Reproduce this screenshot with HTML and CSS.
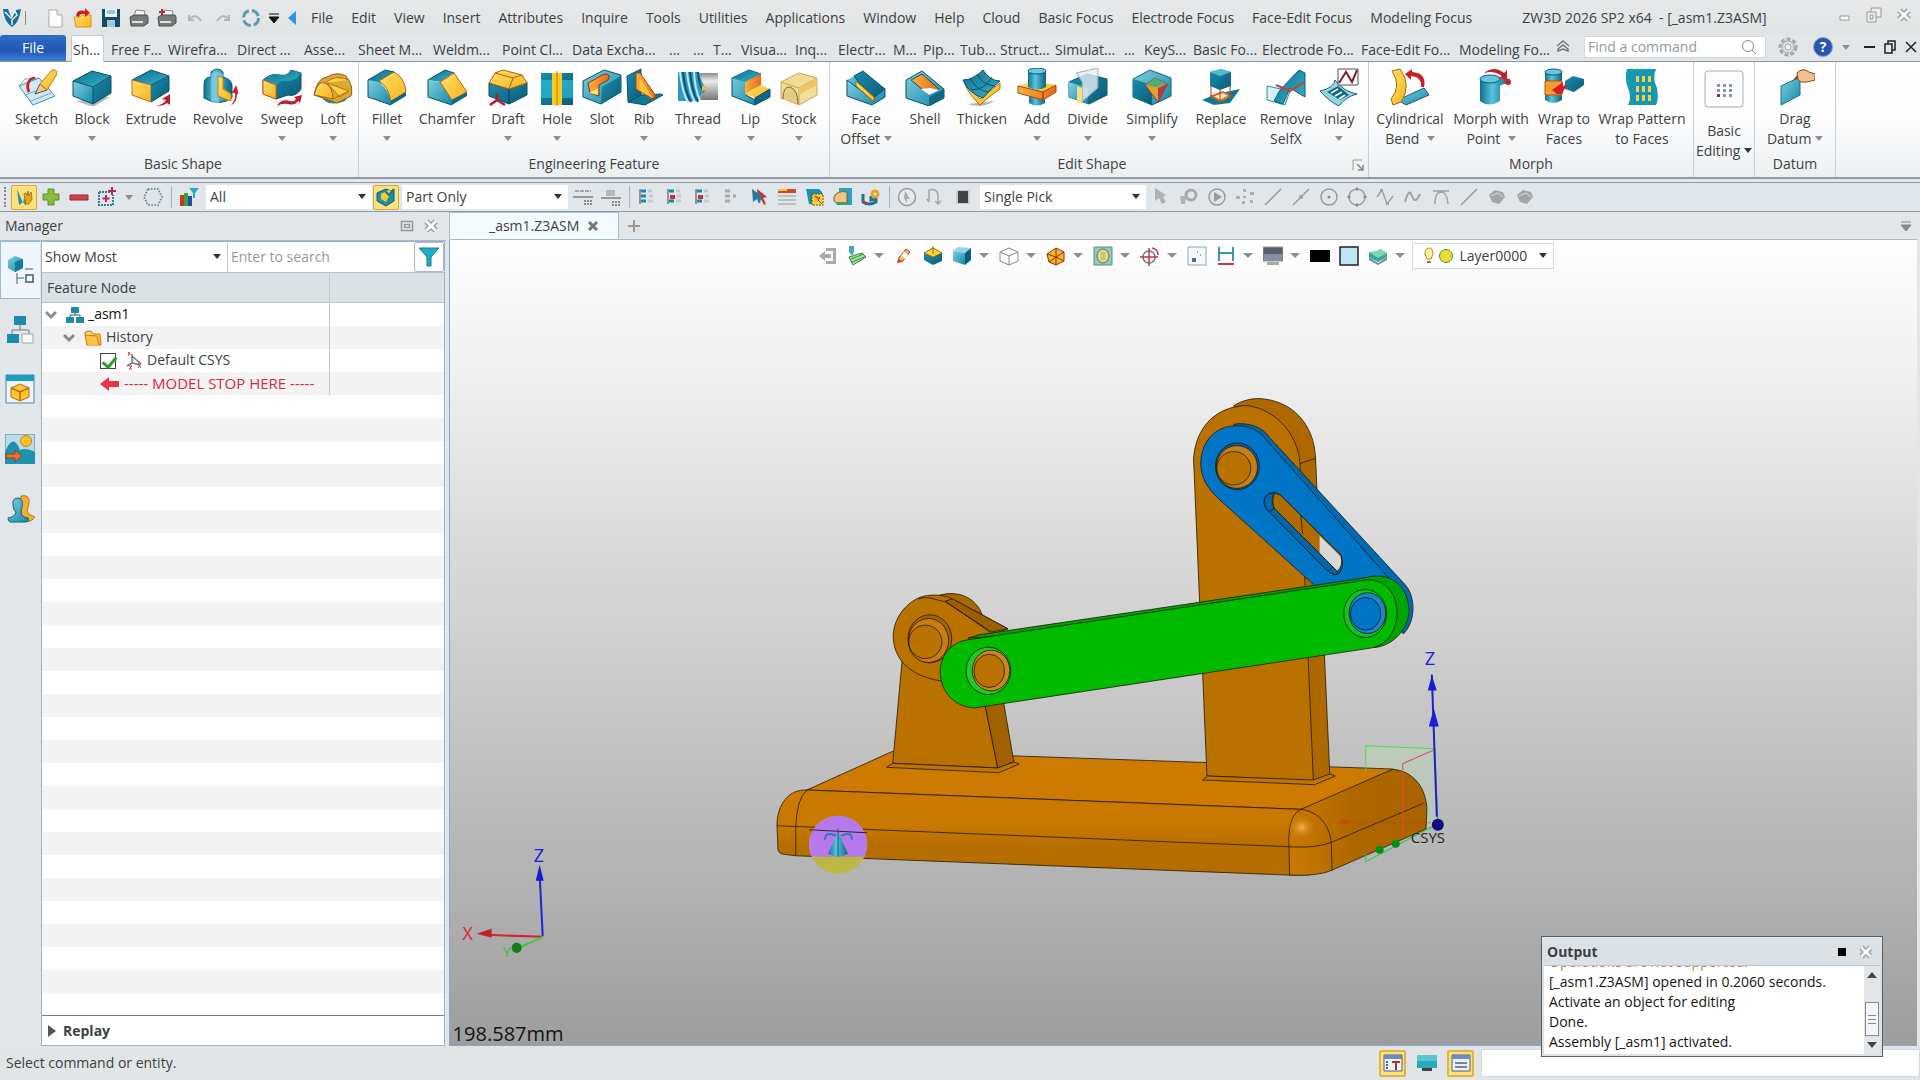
FILE: index.html
```html
<!DOCTYPE html>
<html lang="en">
<head>
<meta charset="utf-8">
<title>ZW3D 2026 SP2 x64 - [_asm1.Z3ASM]</title>
<link rel="stylesheet" href="styles.css">
</head>
<body>
<svg class="defs" aria-hidden="true">
<defs>
<linearGradient id="tl" x1="0" y1="0" x2="1" y2="1"><stop offset="0" stop-color="#7fd0e2"/><stop offset="1" stop-color="#1587a6"/></linearGradient>
<linearGradient id="td" x1="0" y1="0" x2="1" y2="1"><stop offset="0" stop-color="#1b8dac"/><stop offset="1" stop-color="#0b5b78"/></linearGradient>
<linearGradient id="tt" x1="0" y1="0" x2="1" y2="1"><stop offset="0" stop-color="#0f6f8d"/><stop offset="1" stop-color="#35b2cc"/></linearGradient>
<linearGradient id="tc" x1="0" y1="0" x2="1" y2="0"><stop offset="0" stop-color="#126f8f"/><stop offset=".4" stop-color="#58c4dd"/><stop offset="1" stop-color="#0d6380"/></linearGradient>
<linearGradient id="ye" x1="0" y1="0" x2="1" y2="1"><stop offset="0" stop-color="#ffe36a"/><stop offset="1" stop-color="#f9b21c"/></linearGradient>
<linearGradient id="or" x1="0" y1="0" x2="1" y2="0"><stop offset="0" stop-color="#fbb03a"/><stop offset="1" stop-color="#e56a1e"/></linearGradient>
<linearGradient id="gy" x1="0" y1="0" x2="0" y2="1"><stop offset="0" stop-color="#8b8b8b"/><stop offset=".3" stop-color="#ececec"/><stop offset="1" stop-color="#777"/></linearGradient>
</defs>

<symbol id="i-sketch" viewBox="0 0 40 38"><path d="M2 18l20-8 16 18-22 9z" fill="#cfeaf3" stroke="#4a8ba5"/><path d="M2 18l6-7 13-1M8 27l21-8M14 33l20-8" fill="none" stroke="#6cacc2"/><path d="M18 10c-7 0-9 8-6 14" fill="none" stroke="#c01f2b" stroke-width="2.6"/><path d="M18 26l5-10 7 6z" fill="#f3c79a" stroke="#6b4a28"/><path d="M23 16L35 2q5-1 5 4l-10 16z" fill="url(#ye)" stroke="#b87a10"/></symbol>
<symbol id="i-block" viewBox="0 0 40 38"><path d="M4 33l17 6 17-10-4 0z" fill="#bbb"/><path d="M1 13l19-10 19 5-18 11z" fill="url(#tt)"/><path d="M1 13l20 6v17L1 28z" fill="url(#tl)"/><path d="M21 19L39 8v17L21 36z" fill="url(#td)"/><path d="M1 13L20 3l19 5v17L21 36 1 28zM1 13l20 6v17M21 19L39 8" fill="none" stroke="#0c4f66"/></symbol>
<symbol id="i-extrude" viewBox="0 0 40 38"><path d="M1 12l19-10 18 6-18 9z" fill="url(#tt)"/><path d="M1 12l19 5v17L1 27z" fill="url(#ye)" stroke="#c2602a"/><path d="M20 17l18-9v15L20 34z" fill="url(#td)"/><path d="M1 12L20 2l18 6v15L20 34M20 17l18-9" fill="none" stroke="#0c4f66"/><path d="M25 38q8-2 10-6l-4-1 8-5v11l-3-2q-3 3-11 3z" fill="#b9202c"/></symbol>
<symbol id="i-revolve" viewBox="0 0 40 38"><path d="M6 16q0-7 7-7V4q7-6 12 0v5q8 2 9 8v13q-13 9-28 0z" fill="url(#tc)" stroke="#0c5a74"/><path d="M13 6q6-5 12 0v6h-4v23h-8z" fill="#8fd2e4" opacity=".6"/><path d="M20 8l5 2v11l8 5v7l-13-5z" fill="url(#ye)" stroke="#d28015"/><path d="M33 37q5-5 4-12h-3l4-8 3 9h-2q0 9-6 11z" fill="#c9202c"/></symbol>
<symbol id="i-sweep" viewBox="0 0 40 38"><path d="M1 12q8-7 16-5 9 2 12-5l10 3v16q-5 8-13 6l-12 4-13-5z" fill="url(#td)" stroke="#0c4f66"/><path d="M1 12q8-7 16-5 9 2 12-5l10 3q-4 8-14 8-6-1-11 4z" fill="url(#tt)"/><path d="M1 12l13 5v14L1 26z" fill="url(#ye)" stroke="#d35b25"/><path d="M15 38q4-8 13-5 5 1 6-2l-2-2 8-2-2 8-2-2q-3 5-10 3-6-1-11 2z" fill="#b9202c"/></symbol>
<symbol id="i-loft" viewBox="0 0 40 38"><path d="M8 28q6 12 24 5l6-8z" fill="#1a87a6"/><path d="M1 27Q4 10 14 9q10-6 19-1 8 10 5 20l-14 7z" fill="#dca83a" stroke="#8a6012"/><path d="M1 27Q5 12 12 15q8 4 8 16z" fill="url(#ye)" stroke="#b3531c"/><path d="M14 15l22 8-9 6zM12 15q10-9 24-3M20 31l16-8" fill="#ffd23f" stroke="#b3701c"/></symbol>
<symbol id="i-fillet" viewBox="0 0 40 38"><path d="M1 12L18 2l10 2-14 9v19L1 28z" fill="url(#tt)"/><path d="M1 12l11 2q9 7 12 19v4L1 29z" fill="url(#tl)"/><path d="M12 13L27 4q11 6 12 20L24 33Q21 18 12 13z" fill="url(#ye)" stroke="#a86912"/><path d="M24 33l15-9v4l-15 9z" fill="#0f6986"/><path d="M1 12L18 2l9 2M1 12v17l23 8" fill="none" stroke="#0c4f66"/></symbol>
<symbol id="i-chamfer" viewBox="0 0 40 38"><path d="M1 12L18 2l8 3-13 9z" fill="url(#tt)"/><path d="M1 12l12 2 12 18v5L1 29z" fill="url(#tl)"/><path d="M13 14l14-9 13 19-15 8z" fill="url(#ye)" stroke="#b3531c"/><path d="M25 32l15-8v4l-15 9z" fill="#0f6986"/><path d="M1 12L18 2l9 3M1 12v17l24 8" fill="none" stroke="#0c4f66"/></symbol>
<symbol id="i-draft" viewBox="0 0 40 38"><path d="M1 15l20 6v15L1 28zM21 21l18-7v13L21 36z" fill="url(#td)" stroke="#0c4f66"/><path d="M1 15l6-10 8-3 19 5 5 8-18 6z" fill="url(#ye)" stroke="#b35a16"/><path d="M7 5l18 5 9-3M25 10l-4 11" fill="none" stroke="#b35a16"/><path d="M9 25v7l-7 5m7-5l8 5" fill="none" stroke="#b3202b" stroke-width="2.5"/></symbol>
<symbol id="i-hole" viewBox="0 0 40 38"><path d="M4 5h32v32H4z" fill="url(#td)"/><path d="M4 12h32v18H4z" fill="#27bdd8" opacity=".7"/><path d="M15 5h10v32H15z" fill="#fbc91f"/><path d="M20 3v35" stroke="#a87a12"/></symbol>
<symbol id="i-slot" viewBox="0 0 40 38"><path d="M1 13L22 2l17 5v17L19 36 1 29z" fill="url(#tl)" stroke="#0c4f66"/><path d="M20 19L39 8v16L19 36z" fill="url(#td)"/><path d="M6 15L22 6q8 0 4 6l-9 5v11l-9-3z" fill="url(#or)" stroke="#7c3c10"/><path d="M7 25l9-5v7z" fill="#fde36a"/></symbol>
<symbol id="i-rib" viewBox="0 0 40 38"><path d="M3 8L17 1v27l-13 6z" fill="url(#td)" stroke="#0c4f66"/><path d="M4 34l13-7 20-1 2 1-18 10z" fill="#0f7793" stroke="#0c4f66"/><path d="M12 5h4l16 23-4 3-16-10z" fill="url(#or)" stroke="#a34a12"/><path d="M16 10l13 20-14-8z" fill="#fbc737"/></symbol>
<symbol id="i-thread" viewBox="0 0 40 38"><path d="M18 5h22v27H18z" fill="url(#gy)"/><path d="M0 4h20l7 16-7 13H0z" fill="#2f9ac0"/><path d="M2 4q2 20 8 30M9 4q2 20 8 30M16 4q1 18 6 28" fill="none" stroke="#bfe9f5" stroke-width="2"/><path d="M5 4q2 20 8 30M12 4q2 20 8 30M20 4q1 14 6 20" fill="none" stroke="#0f5373" stroke-width="2"/><path d="M24 17l5 3-5 4z" fill="#f5b82b"/></symbol>
<symbol id="i-lip" viewBox="0 0 40 38"><path d="M1 10L18 2l12 4-15 9v12l9 5v5L1 28z" fill="url(#tl)" stroke="#0c4f66"/><path d="M1 10L18 2l12 4-16 8z" fill="url(#tt)"/><path d="M14 14l16-8v11l-16 9z" fill="url(#or)"/><path d="M14 26l16-9 9 4-15 9z" fill="url(#ye)"/><path d="M24 30l15-9v8l-15 8z" fill="#0f6986" stroke="#0c4f66"/></symbol>
<symbol id="i-stock" viewBox="0 0 40 38"><path d="M2 14L20 5l18 5v17L20 37 2 30z" fill="#f1dc9a" stroke="#c9a658"/><path d="M2 14l18 6 18-10M20 20v17" fill="none" stroke="#c9a658"/><path d="M20 20l18-10v7L20 27z" fill="#edc75d"/><path d="M4 31q0-13 7-12 8 3 8 17" fill="#e3cc85" stroke="#7d651e"/></symbol>
<symbol id="i-face" viewBox="0 0 40 38"><path d="M1 12L17 3v20l-16 5z" fill="url(#tl)"/><path d="M17 3l22 18-13 10L8 8z" fill="url(#td)" stroke="#0c4f66"/><path d="M1 12v16l25 9 13-8v-8L26 31z" fill="url(#tl)" stroke="#0c4f66"/><path d="M10 13l18 16v5L10 18z" fill="url(#ye)" stroke="#8c6412"/></symbol>
<symbol id="i-shell" viewBox="0 0 40 38"><path d="M1 12L17 3l22 18v9L24 38 1 30z" fill="url(#tl)" stroke="#0c4f66"/><path d="M6 12l11-6 17 15-10 6z" fill="url(#or)" stroke="#0c4f66"/><path d="M16 21l9-1 9 2-10 5z" fill="#fff"/><path d="M24 29l15-8v9l-15 8z" fill="#0f6986"/></symbol>
<symbol id="i-thicken" viewBox="0 0 40 38"><path d="M6 36q14 5 26-3z" fill="#b9b9a0"/><path d="M2 13q2 10 16 24 12-11 20-16v-6L18 31z" fill="url(#ye)" stroke="#a96b12"/><path d="M1 12q10 0 20-10 7 11 17 11-8 6-17 17Q6 25 1 12z" fill="url(#tt)" stroke="#0c4f66"/><path d="M8 10q6 12 18 14M15 6q5 11 18 12M9 22q14 0 21-13" fill="none" stroke="#0c4f66"/></symbol>
<symbol id="i-add" viewBox="0 0 40 38"><path d="M12 25h16v10q-8 5-16 0z" fill="url(#tc)"/><path d="M1 18l14-5 24 4-13 8z" fill="url(#ye)"/><path d="M1 18l25 6v8L1 25zM26 24l13-7v7l-13 8z" fill="url(#or)" stroke="#a34a12"/><path d="M11 3v16q9 5 18 0V3z" fill="url(#tc)"/><ellipse cx="20" cy="3" rx="9" ry="3" fill="#6acadf" stroke="#0c5a74"/></symbol>
<symbol id="i-divide" viewBox="0 0 40 38"><path d="M1 14l18-8 20 5v16L21 36 1 29z" fill="url(#td)" stroke="#0c4f66"/><path d="M1 14l19 6v16L1 29z" fill="url(#tl)"/><path d="M8 5l22-5v20L14 34V14z" fill="#e5eef2" opacity=".8" stroke="#999"/><path d="M9 18l5 2v16l-5-2z" fill="#f7dc7b"/></symbol>
<symbol id="i-simplify" viewBox="0 0 40 38"><path d="M1 11L18 2l21 8v18L20 37 1 29z" fill="url(#tl)" stroke="#0c6079"/><path d="M1 11l19 6v20L1 29z" fill="url(#td)"/><path d="M13 17l10-7 12 6-9 18z" fill="#e7a02a" stroke="#a33320"/><path d="M13 17l10-7 12 6-11 3z" fill="#4fae74"/><path d="M26 20l11-5-11 20z" fill="#ae3a4a"/></symbol>
<symbol id="i-replace" viewBox="0 0 40 38"><path d="M1 32l14-6 24-5-10 14-16 2z" fill="#137894"/><path d="M11 28l11-4 7 4-10 5z" fill="#fce9b4" stroke="#d16a20" stroke-width="2"/><path d="M10 17v12M29 15v14M19 20v14" stroke="#b6322a"/><path d="M9 4l11-3 10 3v14l-11 4-10-4z" fill="url(#td)"/><path d="M9 4l11-3 10 3-11 4z" fill="#55b9cf"/></symbol>
<symbol id="i-remove" viewBox="0 0 40 38"><path d="M1 18l23 5-5 14-18-5z" fill="#d8eff5" stroke="#2690ad"/><path d="M14 22L33 2l6 3v24L24 20l-7 16-9-3z" fill="url(#tt)" stroke="#0c6079"/><path d="M10 17l14 6 14-9" fill="none" stroke="#c44234" stroke-width="2"/></symbol>
<symbol id="i-inlay" viewBox="0 0 40 38"><path d="M1 23q14-3 15-11 9 12 22 14Q26 29 20 38 11 34 1 23z" fill="#9bd4e3" stroke="#16627b"/><path d="M8 24l11-6 11 9-9 5z" fill="#10657f"/><path d="M12 25l7-4M16 28l7-4M20 31l6-4" stroke="#e7f7fb" stroke-width="2"/><path d="M19 1h20v16H19z" fill="#fff" stroke="#5b4c52"/><path d="M20 15l7-11 6 10 5-12" fill="none" stroke="#7a2230" stroke-width="2"/></symbol>
<symbol id="i-bend" viewBox="0 0 40 38"><path d="M8 32l26-12 5 7-23 10z" fill="url(#tl)" stroke="#0c6079"/><path d="M2 3l8-2q12 16 1 33l-8 3-2-6Q12 18 2 3z" fill="url(#ye)" stroke="#9c6d10"/><path d="M31 19q1-10-10-11v4l-6-6 7-5v3q15 1 12 15z" fill="#c6202c"/></symbol>
<symbol id="i-morph" viewBox="0 0 40 38"><path d="M9 11v22q9 7 20 0V18q4-3 8-2l2-5q-7-1-10 0z" fill="url(#tc)"/><ellipse cx="19" cy="11" rx="10" ry="4" fill="#64c7dd" stroke="#0c5a74"/><path d="M13 5q10-8 20 0l3-3v10l-9-2 4-2Q22 2 14 5z" fill="#c6202c"/><circle cx="37" cy="14" r="3" fill="#c6202c"/></symbol>
<symbol id="i-wrap" viewBox="0 0 40 38"><path d="M1 4v28q8 6 17 0V4z" fill="url(#tc)"/><ellipse cx="9.500" cy="4" rx="8.500" ry="3" fill="#64c7dd" stroke="#0c5a74"/><path d="M1 13h17v14H1z" fill="#f2a02a" stroke="#bf4a18"/><path d="M21 13l8-5 11 3v6l-10 7-9-3z" fill="url(#td)"/><path d="M8 22l11-8v4l4-2-5 10h-5z" fill="#d2202b"/></symbol>
<symbol id="i-pattern" viewBox="0 0 40 38"><path d="M5 1h29q-4 10 1 19 2 11-1 17H6q4-8 0-17-4-10-1-19z" fill="#1697b3"/><path d="M14 8h3v6h-3zM20 8h3v6h-3zM26 8h3v6h-3zM14 18h3v6h-3zM20 18h3v6h-3zM26 18h3v6h-3zM14 27h3v6h-3zM20 27h3v6h-3zM26 27h3v6h-3z" fill="#f4d23b"/></symbol>
<symbol id="i-grid" viewBox="0 0 40 38"><rect x="1" y="1" width="38" height="36" rx="3" fill="#fdfdfd" stroke="#a9acb0"/><path d="M13 14h3v3h-3zM19 14h3v3h-3zM25 14h3v3h-3zM13 19h3v3h-3zM19 19h3v3h-3zM25 19h3v3h-3zM19 24h3v3h-3zM25 24h3v3h-3z" fill="#8799a6"/><path d="M13 24h3v3h-3z" fill="#a12835"/></symbol>
<symbol id="i-drag" viewBox="0 0 40 38"><path d="M6 18L25 9v18L6 37z" fill="url(#tl)" stroke="#107391"/><path d="M18 12l7-8v6z" fill="#a32"/><path d="M22 5q6-6 12-1l6 2v6l-8 2q-8 1-9-3z" fill="#f2c08f" stroke="#7c4a20"/></symbol>

<symbol id="s-logo" viewBox="0 0 20 20"><path d="M1 1h5l3 8 5-7 5-1q-2 14-9 18Q2 14 1 1z" fill="#1c6e94"/><path d="M3 4l6 6 4-7 2 4-5 5v5" fill="none" stroke="#e6eff4" stroke-width="1.500"/></symbol>
<symbol id="s-new" viewBox="0 0 20 20"><path d="M4 2h8l5 5v12H4z" fill="#fff" stroke="#aaa"/><path d="M12 2v5h5" fill="#eee" stroke="#aaa"/></symbol>
<symbol id="s-open" viewBox="0 0 20 20"><path d="M1 9h6l2-2h9v12H3z" fill="url(#ye)" stroke="#d99a18"/><path d="M3 8Q4 1 12 3V0l5 5-5 4V6Q7 5 6 9z" fill="#c6202c"/></symbol>
<symbol id="s-save" viewBox="0 0 20 20"><path d="M1 1h18v18H1z" fill="#164a66"/><path d="M4 1h12v8H4z" fill="#eef5f8"/><path d="M6 3h8M6 5h8" stroke="#3b9fb8"/><path d="M6 12h8v7H6z" fill="#9ccbdc"/></symbol>
<symbol id="s-print" viewBox="0 0 20 20"><path d="M5 8l2-6 9 1-1 6z" fill="#f5f5f5" stroke="#888"/><path d="M1 9l4-2h13l1 2v6l-4 3H2z" fill="#77797a" stroke="#4d4f50"/><path d="M3 14h11" stroke="#ddd" stroke-width="2"/></symbol>
<symbol id="s-undo" viewBox="0 0 20 20"><path d="M4 7v5h5M4 12Q10 4 16 13" fill="none" stroke="#b4b6b7" stroke-width="2"/></symbol>
<symbol id="s-redo" viewBox="0 0 20 20"><path d="M16 7v5h-5M16 12Q10 4 4 13" fill="none" stroke="#b4b6b7" stroke-width="2"/></symbol>
<symbol id="s-sync" viewBox="0 0 20 20"><circle cx="10" cy="10" r="7.500" fill="none" stroke="#5f9ab0" stroke-width="3" stroke-dasharray="9 3"/></symbol>
<symbol id="s-pick" viewBox="0 0 20 20"><path d="M3 2l6 14 1-5 2 4v4l-3-4-4 3z" fill="#2d8fb0"/><path d="M10 7q2-3 3 2l1-5 1 5 2-4 1 7-3 5h-3z" fill="#e8a520" stroke="#a77a18"/></symbol>
<symbol id="s-plus" viewBox="0 0 20 20"><path d="M7 2h6v5h5v6h-5v5H7v-5H2V7h5z" fill="#8bbd3c" stroke="#5f9122"/></symbol>
<symbol id="s-minus" viewBox="0 0 20 20"><path d="M1 8h18v5H1z" fill="#cc4251" stroke="#a32634"/></symbol>
<symbol id="s-marq" viewBox="0 0 20 20"><path d="M2 5h11M2 5v13h14V8" fill="none" stroke="#367a96" stroke-width="2" stroke-dasharray="2 1"/><path d="M15 0v8M11 4h8M9 8v7M5.500 11.500h7" stroke="#b32a4a" stroke-width="2"/></symbol>
<symbol id="s-lasso" viewBox="0 0 20 20"><path d="M5 2h10l4 8-4 8H5l-4-8z" fill="none" stroke="#6a8ea6" stroke-width="2" stroke-dasharray="1.500 1.500"/></symbol>
<symbol id="s-filter" viewBox="0 0 20 20"><path d="M1 8h4v11H1z" fill="#c8342d"/><path d="M5 6h4v13H5z" fill="#3aa239"/><path d="M9 9h4v10H9z" fill="#294d9e"/><path d="M10 1h10l-4 5v5h-2V6z" fill="#2ba8c4"/></symbol>
<symbol id="s-box" viewBox="0 0 20 20"><path d="M1 6l9-4 5 2 3-2v12l-8 5-9-5z" fill="#1991ae" stroke="#0c5a74"/><path d="M5 7l7-4 4 1-6 11-5-3z" fill="#fbc62f"/><path d="M9 4l4 4 4-5" fill="none" stroke="#0c7b98" stroke-width="2"/></symbol>
<symbol id="s-align" viewBox="0 0 20 20"><path d="M2 4h16" stroke="#a5a7a9" stroke-width="2" stroke-dasharray="4 1"/><path d="M0 10h20" stroke="#959799" stroke-width="2"/><path d="M11 14h8M11 17h8" stroke="#888" stroke-width="2" stroke-dasharray="2 1"/></symbol>
<symbol id="s-dist" viewBox="0 0 20 20"><path d="M5 3h9v6H5z" fill="#b5b7b9"/><path d="M0 11h20" stroke="#959799" stroke-width="2"/><path d="M11 15h8M11 18h8" stroke="#888" stroke-width="2" stroke-dasharray="2 1"/></symbol>
<symbol id="s-list" viewBox="0 0 20 20"><path d="M4 4h5M4 9h5M4 14h5" stroke="#1b8aa8" stroke-width="3"/><path d="M3 2v15" stroke="#444"/><path d="M11 4h4M12 9h4M11 14h5" stroke="#c5c9cc" stroke-width="3"/></symbol>
<symbol id="s-listr" viewBox="0 0 20 20"><path d="M4 4h5M4 14h5" stroke="#1b8aa8" stroke-width="3"/><path d="M5 8h5v4H5z" fill="#c6303c"/><path d="M3 2v15" stroke="#444"/><path d="M11 4h4M12 9h4M11 14h5" stroke="#c5c9cc" stroke-width="3"/></symbol>
<symbol id="s-listg" viewBox="0 0 20 20"><path d="M4 4h5M4 9h5M4 14h5M12 9h3" stroke="#aaa" stroke-width="3"/></symbol>
<symbol id="s-cur" viewBox="0 0 20 20"><path d="M8 2l1 14 3-4 3 6 2-1-3-6 4-1z" fill="#c8303d"/><path d="M3 2l1 13 4-3 3 5 1-6 1-2z" fill="#20809e"/></symbol>
<symbol id="s-table" viewBox="0 0 20 20"><path d="M1 4h18" stroke="#d34a28" stroke-width="4"/><path d="M1 3h9" stroke="#f4c53a" stroke-width="2"/><path d="M1 9h18M1 13h18M1 17h18" stroke="#999"/></symbol>
<symbol id="s-region" viewBox="0 0 20 20"><path d="M1 2h13l3 3v12H4z" fill="#1a91ae"/><path d="M7 7h11v11H7z" fill="#ffd23e" stroke="#5e4f10" stroke-dasharray="2 1"/><path d="M9 9l6 2-2 2 4 4" stroke="#b33" fill="#e67b22"/></symbol>
<symbol id="s-hand" viewBox="0 0 20 20"><path d="M6 1h13v17H6z" fill="#2aa3bf"/><path d="M1 10q3-7 13-5v11q-8 4-13-2z" fill="#f0c48b" stroke="#7f6026"/><path d="M3 15h10v3H4z" fill="#4f9a5c"/></symbol>
<symbol id="s-key" viewBox="0 0 20 20"><path d="M2 7v8q6 4 13 0v-3l-5 1V9" fill="none" stroke="#20748f" stroke-width="3"/><circle cx="14" cy="7" r="3" fill="none" stroke="#e7a222" stroke-width="3"/><path d="M2 14l4 3" stroke="#c5302b" stroke-width="2"/></symbol>
<symbol id="s-compass" viewBox="0 0 20 20"><circle cx="10" cy="10" r="8.500" fill="#e8eaec" stroke="#97999b" stroke-width="1.500"/><path d="M8 4l5 8-3 0v4l-3-5z" fill="#a9abad"/></symbol>
<symbol id="s-clip" viewBox="0 0 20 20"><path d="M4 3v12M4 3q8-2 9 5v8M4 15l-2-3M13 17l3-3M13 17l-3-3" fill="none" stroke="#a4a6a8" stroke-width="1.500"/></symbol>
<symbol id="s-stop" viewBox="0 0 20 20"><path d="M3 3h14v14H3z" fill="#ccc"/><path d="M5 4h10v12H5z" fill="#414347"/></symbol>
<symbol id="s-gcur" viewBox="0 0 20 20"><path d="M4 1v13l4-3 3 6 4-2-3-5 3-2z" fill="#aeb0b2"/></symbol>
<symbol id="s-ggear" viewBox="0 0 20 20"><circle cx="12" cy="8" r="5" fill="none" stroke="#a8aaac" stroke-width="3"/><path d="M1 9h6l-1 8H2z" fill="#b2b4b6"/></symbol>
<symbol id="s-play" viewBox="0 0 20 20"><circle cx="10" cy="10" r="8" fill="none" stroke="#999b9d" stroke-width="1.500"/><path d="M7 5l8 5-8 5z" fill="#9a9c9e"/></symbol>
<symbol id="s-dots" viewBox="0 0 20 20"><path d="M1 9h4v3H1zM8 2h3v3H8zM15 5h4v3h-4zM8 9h3v2H8zM15 13h3v3h-3zM7 14h3v3H7z" fill="#adafb1"/></symbol>
<symbol id="s-line" viewBox="0 0 20 20"><path d="M2 18L18 2" stroke="#999b9d" stroke-width="1.500"/></symbol>
<symbol id="s-linem" viewBox="0 0 20 20"><path d="M2 18L18 2" stroke="#999b9d" stroke-width="1.500"/><circle cx="10" cy="10" r="2" fill="#999b9d"/></symbol>
<symbol id="s-circd" viewBox="0 0 20 20"><circle cx="10" cy="10" r="8" fill="none" stroke="#999b9d" stroke-width="1.500"/><circle cx="10" cy="10" r="1.500" fill="#888"/></symbol>
<symbol id="s-circ" viewBox="0 0 20 20"><circle cx="10" cy="10" r="8" fill="none" stroke="#999b9d" stroke-width="1.500"/><path d="M9 2h2M9 18h2M2 9v2M18 9v2" stroke="#888" stroke-width="3"/></symbol>
<symbol id="s-poly" viewBox="0 0 20 20"><path d="M2 10l5-7 5 14 6-8" fill="none" stroke="#a0a2a4" stroke-width="1.500"/><path d="M5 2h3v3H5zM11 15h3v3h-3z" fill="#a0a2a4"/></symbol>
<symbol id="s-spl" viewBox="0 0 20 20"><path d="M2 15Q6 0 9 9t8-2" fill="none" stroke="#a0a2a4" stroke-width="2"/></symbol>
<symbol id="s-arc" viewBox="0 0 20 20"><path d="M2 4h16M4 17q0-12 6-12t7 12" fill="none" stroke="#a0a2a4" stroke-width="1.500"/></symbol>
<symbol id="s-blob" viewBox="0 0 20 20"><path d="M2 8l6-5 8 2 2 5-6 7-7-2z" fill="#a2a4a6"/><path d="M4 9l7-3 5 4" fill="none" stroke="#ddd"/></symbol>

<symbol id="v-exit" viewBox="0 0 20 20"><path d="M8 2h10v16H8v-3h7V5H8z" fill="#aaa"/><path d="M1 10l6-5v3h6v4H7v3z" fill="#aaa"/></symbol>
<symbol id="v-hand" viewBox="0 0 20 20"><path d="M2 0h5v6l-2 4-3-4z" fill="#48a5bd"/><path d="M2 11l13-4 4 4-13 8z" fill="#a9dba2" stroke="#2e8d3a"/><path d="M4 13l13-5M5 16l13-5" stroke="#2e9a3e"/></symbol>
<symbol id="v-pen" viewBox="0 0 20 20"><path d="M4 13L12 3l4 3-8 10z" fill="#f3b264" stroke="#a63a2a"/><path d="M10 6l4 3-3 4-4-3z" fill="#fff"/><path d="M4 13l4 3-5 1z" fill="#c93b31"/></symbol>
<symbol id="v-box" viewBox="0 0 20 20"><path d="M1 7l9 4v8l-9-5zM10 11l9-4v8l-9 4z" fill="url(#td)"/><path d="M1 7l9-5 9 5-9 4z" fill="#ffd42f" stroke="#8a6d10"/><path d="M10 0v8" stroke="#8a6d10"/></symbol>
<symbol id="v-cube" viewBox="0 0 20 20"><path d="M1 5l5-4 13 1-6 5z" fill="#8fd5ec"/><path d="M1 5l12 2v12L1 15z" fill="url(#tl)"/><path d="M13 7l6-5v12l-6 5z" fill="#0c5b82"/></symbol>
<symbol id="v-wire" viewBox="0 0 20 20"><path d="M1 6l9-4 9 4v9l-9 4-9-4zM1 6l9 4 9-4M10 10v9" fill="#fff" stroke="#888"/></symbol>
<symbol id="v-geo" viewBox="0 0 20 20"><path d="M1 8l9-6 8 4v9l-8 4-7-3z" fill="#fcb52b" stroke="#7d3511"/><path d="M1 8l9 3 8-5M10 11v8M10 2v9L3 16M10 11l8 4" fill="none" stroke="#7d3511"/></symbol>
<symbol id="v-look" viewBox="0 0 20 20"><path d="M1 1h18v18H1z" fill="#8cc8cc" stroke="#47919c"/><ellipse cx="10" cy="10" rx="6" ry="7" fill="#ecd46a" stroke="#7f7524"/><path d="M8 6h4v8H8z" fill="#b5c9a0"/></symbol>
<symbol id="v-target" viewBox="0 0 20 20"><circle cx="9" cy="11" r="6" fill="none" stroke="#5a8a78" stroke-width="1.500"/><path d="M9 2v18M0 11h18M12 2q6 1 6 7" fill="none" stroke="#c4344c" stroke-width="1.500"/></symbol>
<symbol id="v-doc" viewBox="0 0 20 20"><path d="M1 1h18v18H1z" fill="#f4f8fa" stroke="#8ba4b4"/><path d="M5 12h4v4H5z" fill="#4f6f83"/><path d="M10 5h1v2h-1zM13 8h1v2h-1z" fill="#8ba4b4"/></symbol>
<symbol id="v-dim" viewBox="0 0 20 20"><path d="M3 1v14M17 1v14M3 7h14" stroke="#3d96ab" stroke-width="2"/><path d="M2 18h16" stroke="#c23a45" stroke-width="2"/></symbol>
<symbol id="v-mon" viewBox="0 0 20 20"><path d="M0 1h20v14H0z" fill="#5b5f6d" stroke="#999"/><path d="M1 8h18v7H1z" fill="#8a90a0"/><path d="M4 16h12v3H4z" fill="#aaa"/></symbol>
<symbol id="v-layer" viewBox="0 0 20 20"><path d="M1 11l9 6 9-6v3l-9 5-9-5z" fill="#7a8b93"/><path d="M1 6q9 0 11-3l7 4v4l-9 5-9-5z" fill="#35a594"/><path d="M1 6q9 0 11-3l7 4-9 5z" fill="#7fd6bd"/></symbol>

<symbol id="m-feat" viewBox="0 0 30 30"><path d="M2 5l7-4 8 3v9l-8 4-7-4z" fill="url(#tl)"/><path d="M9 7l8-3v9l-8 4z" fill="#1677a0"/><path d="M19 14h8M11 18v11M11 23h7" stroke="#34607a" fill="none"/><path d="M20 20h7v7h-7z" fill="#fff" stroke="#34607a" stroke-width="1.500"/></symbol>
<symbol id="m-tree" viewBox="0 0 30 30"><path d="M9 2h12v9H9zM2 20h12v9H2z" fill="#1b8daa"/><path d="M15 11v5M7 20v-4h17v4" fill="none" stroke="#777"/><path d="M17 20h11v9H17z" fill="#f8fafa" stroke="#9ab"/></symbol>
<symbol id="m-view" viewBox="0 0 30 30"><path d="M1 1h28v28H1z" fill="#edf4f7" stroke="#5386a4"/><path d="M1 1h28v6H1z" fill="#1aa0bd"/><path d="M6 14l9-4 9 4v9l-9 4-9-4z" fill="#fdc62c" stroke="#b06b12"/><path d="M6 14l9 4 9-4M15 18v9" fill="none" stroke="#b06b12" stroke-width="1.500"/></symbol>
<symbol id="m-img" viewBox="0 0 30 30"><path d="M0 0h30v30H0z" fill="#b9dce6" stroke="#3987a0"/><path d="M0 18q8-20 15-2 6-3 15 2v12H0z" fill="#1d91ad"/><circle cx="21" cy="7" r="5.500" fill="#fdc02d" stroke="#c98313"/><path d="M1 20h9v-4l7 6-7 6v-4H1z" fill="#e4702c" stroke="#8a4518"/></symbol>
<symbol id="m-user" viewBox="0 0 30 30"><path d="M16 2q9-2 8 7l-2 8q1 4 8 6-6 8-14 2z" fill="#f6b02c" stroke="#b87613"/><path d="M13 4q-6 0-5 7 0 5 3 7-1 5-8 6 0 3 2 4h16q4-1 2-4-7-1-7-6 4-14-3-14z" fill="url(#tl)" stroke="#0c6380"/></symbol>
<symbol id="t-asm" viewBox="0 0 18 18"><path d="M5 1h8v6H5zM0 11h8v6H0zM10 11h8v6h-8z" fill="#1b8daa"/><path d="M9 7v2M4 11V9h10v2" fill="none" stroke="#555"/></symbol>
<symbol id="t-fold" viewBox="0 0 18 18"><path d="M1 3l6-1 2 3h7l1 11H3z" fill="url(#ye)" stroke="#c57c12"/><path d="M3 16L1 6l12 1 2 9" fill="#fcc440" stroke="#c57c12"/></symbol>
<symbol id="t-csys" viewBox="0 0 18 18"><path d="M7 2v9l8 2M7 11l-5 3M7 4l9 8" fill="none" stroke="#687a7c" stroke-width="1.500"/><path d="M3 0l2 3M5 0L3 4M13 11l3 5M16 11l-3 5M4 14h3l-3 3h3" fill="none" stroke="#c33a48"/></symbol>
<symbol id="t-stop" viewBox="0 0 20 18"><path d="M0 9l9-7v4h10v6H9v4z" fill="#e8354c"/></symbol>
<symbol id="x" viewBox="0 0 14 14"><path d="M3 3l8 8M11 3l-8 8" stroke="#999da0" stroke-width="5"/><path d="M3 3l8 8M11 3l-8 8" stroke="#fff" stroke-width="2.500"/></symbol>
<symbol id="pin" viewBox="0 0 14 14"><path d="M1.500 2.500h11v9h-11zM4.500 5.500h5v3h-5z" fill="#eee" stroke="#94979a" stroke-width="1.500"/></symbol>
</svg>

<header class="titlebar">
  <svg class="ic"><use href="#s-logo"/></svg><span class="logo-rule"></span>
  <div class="quick">
    <button aria-label="New"><svg class="ic"><use href="#s-new"/></svg></button>
    <button aria-label="Open"><svg class="ic"><use href="#s-open"/></svg></button>
    <button aria-label="Save"><svg class="ic"><use href="#s-save"/></svg></button>
    <button aria-label="Print"><svg class="ic"><use href="#s-print"/></svg></button>
    <button aria-label="Plot"><svg class="ic"><use href="#s-print"/><path d="M2 4h6M5 1v6" stroke="#c02a35" stroke-width="2"/></svg></button>
    <button aria-label="Undo"><svg class="ic"><use href="#s-undo"/></svg></button>
    <button aria-label="Redo"><svg class="ic"><use href="#s-redo"/></svg></button>
    <button aria-label="Refresh"><svg class="ic"><use href="#s-sync"/></svg></button>
  </div>
  <button class="more" aria-label="Customize"><svg width="12" height="12"><path d="M1 2h10M1 5h10l-5 6z" fill="#111" stroke="#111"/></svg></button>
  <button class="back" aria-label="Collapse menu"><svg width="8" height="14"><path d="M8 0v14L0 7z" fill="#2d95dd"/></svg></button>
  <nav class="menu">
    <a href="#">File</a><a href="#">Edit</a><a href="#">View</a><a href="#">Insert</a><a href="#">Attributes</a><a href="#">Inquire</a><a href="#">Tools</a><a href="#">Utilities</a><a href="#">Applications</a><a href="#">Window</a><a href="#">Help</a><a href="#">Cloud</a><a href="#">Basic Focus</a><a href="#">Electrode Focus</a><a href="#">Face-Edit Focus</a><a href="#">Modeling Focus</a>
  </nav>
  <span class="apptitle">ZW3D 2026 SP2 x64&nbsp; - [_asm1.Z3ASM]</span>
  <div class="winbtns">
    <button aria-label="Minimize"><svg width="14" height="14"><path d="M2 8h9v4H2z" fill="#fff" stroke="#999"/></svg></button>
    <button aria-label="Restore"><svg width="16" height="16"><path d="M5 1h10v9H5z" fill="#eee" stroke="#999"/><path d="M1 5h9v10H1zM4 8h3v4H4z" fill="#eee" stroke="#999"/></svg></button>
    <button aria-label="Close"><svg width="16" height="16"><use href="#x"/></svg></button>
  </div>
</header>

<div class="tabbar">
  <button class="filetab">File</button>
  <nav class="tabs">
    <a class="on" href="#">Sh...</a><a href="#">Free F...</a><a href="#">Wirefra...</a><a href="#">Direct ...</a><a href="#">Asse...</a><a href="#">Sheet M...</a><a href="#">Weldm...</a><a href="#">Point Cl...</a><a href="#">Data Excha...</a><a href="#">...</a><a href="#">...</a><a href="#">T...</a><a href="#">Visua...</a><a href="#">Inq...</a><a href="#">Electr...</a><a href="#">M...</a><a href="#">Pip...</a><a href="#">Tub...</a><a href="#">Struct...</a><a href="#">Simulat...</a><a href="#">...</a><a href="#">KeyS...</a><a href="#">Basic Fo...</a><a href="#">Electrode Fo...</a><a href="#">Face-Edit Fo...</a><a href="#">Modeling Fo...</a>
  </nav>
  <button class="collapse" aria-label="Collapse ribbon"><svg width="14" height="12"><path d="M1 6l6-5 6 5M2 11V9l5-4 5 4v2l-5-2z" fill="none" stroke="#777" stroke-width="1.500"/></svg></button>
  <label class="find"><input type="text" placeholder="Find a command" aria-label="Find a command"><svg width="16" height="16"><circle cx="7" cy="7" r="5.500" fill="none" stroke="#888"/><path d="M11 11l4 4" stroke="#888"/></svg></label>
  <div class="utils">
    <button aria-label="Settings"><svg width="22" height="22"><circle cx="11" cy="11" r="8" fill="none" stroke="#a5a8ab" stroke-width="3" stroke-dasharray="4 2"/><circle cx="11" cy="11" r="6" fill="#dcdfe1" stroke="#a5a8ab"/><circle cx="11" cy="11" r="3" fill="#eef0f1" stroke="#a5a8ab"/></svg></button>
    <button class="help" aria-label="Help">?</button>
    <i class="caret"></i>
    <button class="doc" aria-label="Minimize document"><svg width="12" height="14"><path d="M1 7h11" stroke="#222" stroke-width="2"/></svg></button>
    <button class="doc" aria-label="Restore document"><svg width="12" height="14"><path d="M1 4h7v9H1zM4 4V1h7v9H8" fill="none" stroke="#222" stroke-width="1.500"/></svg></button>
    <button class="doc" aria-label="Close document"><svg width="12" height="14"><path d="M1 2l10 10M11 2L1 12" stroke="#222" stroke-width="1.500"/></svg></button>
  </div>
</div>

<div class="ribbon">
  <section class="group"><div class="tools g-basic">
    <button><svg><use href="#i-sketch"/></svg>Sketch<br><i class="caret"></i></button>
    <button><svg><use href="#i-block"/></svg>Block<br><i class="caret"></i></button>
    <button><svg><use href="#i-extrude"/></svg>Extrude</button>
    <button><svg><use href="#i-revolve"/></svg>Revolve</button>
    <button><svg><use href="#i-sweep"/></svg>Sweep<br><i class="caret"></i></button>
    <button><svg><use href="#i-loft"/></svg>Loft<br><i class="caret"></i></button>
  </div><h2 class="t-basic">Basic Shape</h2></section>
  <section class="group"><div class="tools g-eng">
    <button><svg><use href="#i-fillet"/></svg>Fillet<br><i class="caret"></i></button>
    <button><svg><use href="#i-chamfer"/></svg>Chamfer</button>
    <button><svg><use href="#i-draft"/></svg>Draft<br><i class="caret"></i></button>
    <button><svg><use href="#i-hole"/></svg>Hole<br><i class="caret"></i></button>
    <button><svg><use href="#i-slot"/></svg>Slot</button>
    <button><svg><use href="#i-rib"/></svg>Rib<br><i class="caret"></i></button>
    <button><svg><use href="#i-thread"/></svg>Thread<br><i class="caret"></i></button>
    <button><svg><use href="#i-lip"/></svg>Lip<br><i class="caret"></i></button>
    <button><svg><use href="#i-stock"/></svg>Stock<br><i class="caret"></i></button>
  </div><h2>Engineering Feature</h2></section>
  <section class="group"><div class="tools g-edit">
    <button><svg><use href="#i-face"/></svg>Face<br>Offset <i class="caret"></i></button>
    <button><svg><use href="#i-shell"/></svg>Shell</button>
    <button><svg><use href="#i-thicken"/></svg>Thicken</button>
    <button><svg><use href="#i-add"/></svg>Add<br><i class="caret"></i></button>
    <button><svg><use href="#i-divide"/></svg>Divide<br><i class="caret"></i></button>
    <button><svg><use href="#i-simplify"/></svg>Simplify<br><i class="caret"></i></button>
    <button><svg><use href="#i-replace"/></svg>Replace</button>
    <button><svg><use href="#i-remove"/></svg>Remove<br>SelfX</button>
    <button><svg><use href="#i-inlay"/></svg>Inlay<br><i class="caret"></i></button>
  </div><h2 class="t-edit">Edit Shape</h2><button class="launch" aria-label="Edit Shape options"><svg width="12" height="12"><path d="M1 11V1h9" fill="none" stroke="#999"/><path d="M5 5l6 6M11 6v5H6" stroke="#888" fill="none" stroke-width="1.500"/></svg></button></section>
  <section class="group"><div class="tools g-morph">
    <button><svg><use href="#i-bend"/></svg>Cylindrical<br>Bend &nbsp;<i class="caret"></i></button>
    <button><svg><use href="#i-morph"/></svg>Morph with<br>Point &nbsp;<i class="caret"></i></button>
    <button><svg><use href="#i-wrap"/></svg>Wrap to<br>Faces</button>
    <button><svg><use href="#i-pattern"/></svg>Wrap Pattern<br>to Faces</button>
  </div><h2>Morph</h2></section>
  <section class="group g-more"><button class="tall"><svg><use href="#i-grid"/></svg>Basic<br>Editing <i class="caret"></i></button></section>
  <section class="group g-datum"><div class="tools">
    <button><svg><use href="#i-drag"/></svg>Drag<br>Datum <i class="caret"></i></button>
  </div><h2>Datum</h2></section>
</div>

<div class="pickbar">
  <i class="grip"></i>
  <button class="lit" aria-label="Pick"><svg class="ic"><use href="#s-pick"/></svg></button>
  <button aria-label="Add to selection"><svg class="ic"><use href="#s-plus"/></svg></button>
  <button aria-label="Remove from selection"><svg class="ic"><use href="#s-minus"/></svg></button>
  <button aria-label="Pick box"><svg class="ic"><use href="#s-marq"/></svg></button>
  <i class="caret"></i>
  <button class="lasso" aria-label="Pick lasso"><svg class="ic"><use href="#s-lasso"/></svg></button>
  <i class="rule"></i>
  <button aria-label="Filter"><svg class="ic"><use href="#s-filter"/></svg></button>
  <span class="combo w-pick"><select aria-label="Entity filter"><option>All</option></select></span>
  <button class="lit" aria-label="Scope"><svg class="ic"><use href="#s-box"/></svg></button>
  <span class="combo w-pick"><select aria-label="Pick scope"><option>Part Only</option></select></span>
  <button aria-label="Align"><svg class="ic"><use href="#s-align"/></svg></button>
  <button aria-label="Distribute"><svg class="ic"><use href="#s-dist"/></svg></button>
  <i class="rule"></i>
  <button aria-label="Show all"><svg class="ic"><use href="#s-list"/></svg></button>
  <button aria-label="Show picked"><svg class="ic"><use href="#s-listr"/></svg></button>
  <button aria-label="Hide picked"><svg class="ic"><use href="#s-listr"/></svg></button>
  <button aria-label="Clear list"><svg class="ic"><use href="#s-listg"/></svg></button>
  <button aria-label="Pick last"><svg class="ic"><use href="#s-cur"/></svg></button>
  <button aria-label="Pick list"><svg class="ic"><use href="#s-table"/></svg></button>
  <button aria-label="Pick region"><svg class="ic"><use href="#s-region"/></svg></button>
  <button aria-label="Pick hidden"><svg class="ic"><use href="#s-hand"/></svg></button>
  <button aria-label="Pick options"><svg class="ic"><use href="#s-key"/></svg></button>
  <i class="rule"></i>
  <button aria-label="Orient"><svg class="ic"><use href="#s-compass"/></svg></button>
  <button aria-label="Chain"><svg class="ic"><use href="#s-clip"/></svg></button>
  <button aria-label="Solid"><svg class="ic"><use href="#s-stop"/></svg></button>
  <span class="combo w-pick"><select aria-label="Pick mode"><option>Single Pick</option></select></span>
  <button aria-label="Cursor"><svg class="ic"><use href="#s-gcur"/></svg></button>
  <button aria-label="Pick settings"><svg class="ic"><use href="#s-ggear"/></svg></button>
  <button aria-label="Run"><svg class="ic"><use href="#s-play"/></svg></button>
  <button aria-label="Points"><svg class="ic"><use href="#s-dots"/></svg></button>
  <button aria-label="End point"><svg class="ic"><use href="#s-line"/></svg></button>
  <button aria-label="Mid point"><svg class="ic"><use href="#s-linem"/></svg></button>
  <button aria-label="Center"><svg class="ic"><use href="#s-circd"/></svg></button>
  <button aria-label="Quadrant"><svg class="ic"><use href="#s-circ"/></svg></button>
  <button aria-label="Polyline"><svg class="ic"><use href="#s-poly"/></svg></button>
  <button aria-label="Spline"><svg class="ic"><use href="#s-spl"/></svg></button>
  <button aria-label="Tangent"><svg class="ic"><use href="#s-arc"/></svg></button>
  <button aria-label="On curve"><svg class="ic"><use href="#s-line"/></svg></button>
  <button aria-label="On face"><svg class="ic"><use href="#s-blob"/></svg></button>
  <button aria-label="On mesh"><svg class="ic"><use href="#s-blob"/></svg></button>
</div>

<main class="work">
  <aside class="manager">
    <div class="mhead"><h1>Manager</h1><button aria-label="Dock"><svg width="14" height="14"><use href="#pin"/></svg></button><button aria-label="Close manager"><svg width="16" height="16"><use href="#x"/></svg></button></div>
    <div class="mbody">
      <nav class="side">
        <button class="on" aria-label="Features"><svg><use href="#m-feat"/></svg></button>
        <button aria-label="Assembly"><svg><use href="#m-tree"/></svg></button>
        <button aria-label="Views"><svg><use href="#m-view"/></svg></button>
        <button aria-label="Visuals"><svg><use href="#m-img"/></svg></button>
        <button aria-label="Roles"><svg><use href="#m-user"/></svg></button>
      </nav>
      <div class="panel">
        <div class="search">
          <span class="combo"><select aria-label="Show"><option>Show Most</option></select></span>
          <input type="text" placeholder="Enter to search" aria-label="Search features">
          <button aria-label="Filter features"><svg width="20" height="20"><path d="M0 1h20l-8 9v9H8v-9z" fill="#22acc8" stroke="#0f7f99"/></svg></button>
        </div>
        <table class="tree">
          <thead><tr><th>Feature Node</th><th></th></tr></thead>
          <tbody>
            <tr><td class="l0"><svg class="chev"><path d="M1 3l5 5 5-5"/></svg><svg class="node"><use href="#t-asm"/></svg><span class="strong">_asm1</span></td><td></td></tr>
            <tr><td class="l1"><svg class="chev"><path d="M1 3l5 5 5-5"/></svg><svg class="node"><use href="#t-fold"/></svg>History</td><td></td></tr>
            <tr><td class="l2"><input type="checkbox" checked id="csys"><label for="csys"><svg class="node"><use href="#t-csys"/></svg>Default CSYS</label></td><td></td></tr>
            <tr><td class="l2 stop"><svg class="arrow"><use href="#t-stop"/></svg>----- MODEL STOP HERE -----</td><td></td></tr>
          </tbody>
        </table>
        <div class="blank"></div>
        <button class="replay"><svg width="10" height="14"><path d="M1 1v12l8-6z" fill="#555"/></svg>Replay</button>
      </div>
    </div>
  </aside>
  <section class="docarea">
    <div class="doctabs">
      <div class="doctab"><a href="#">_asm1.Z3ASM</a><button aria-label="Close tab"><svg width="12" height="12"><path d="M2 2l8 8M10 2l-8 8" stroke="#77756a" stroke-width="3"/></svg></button></div>
      <button class="plus" aria-label="New tab"><svg width="12" height="12"><path d="M6 0v12M0 6h12" stroke="#999" stroke-width="2"/></svg></button>
      <button class="tablist" aria-label="Tab list"><svg width="12" height="12"><path d="M1 2h10M1 5h10l-5 6z" fill="#888" stroke="#888"/></svg></button>
    </div>
    <div class="canvas">
      <svg class="scene" viewBox="449 240 1468 804" preserveAspectRatio="xMidYMid slice" role="img" aria-label="Four bar linkage model">
        <defs>
          <linearGradient id="baseF" x1="0" y1="0" x2="0" y2="1"><stop offset="0" stop-color="#cb7a00"/><stop offset=".4" stop-color="#c87900"/><stop offset=".65" stop-color="#b76e00"/><stop offset="1" stop-color="#b56c00"/></linearGradient>
          <radialGradient id="shine"><stop offset="0" stop-color="#f6b04f"/><stop offset="1" stop-color="#c87900" stop-opacity="0"/></radialGradient>
          <linearGradient id="baseR" x1="0" y1="0" x2="1" y2="0"><stop offset="0" stop-color="#c87900"/><stop offset=".5" stop-color="#ad6700"/><stop offset="1" stop-color="#a96400"/></linearGradient>
        </defs>
        <path d="M1365 745l69 3 3 74-35 15-37-16z" fill="#b9d9b4" fill-opacity=".4"/>
        <g class="model" transform="translate(760 380) scale(.44643 .33333)">
          <path fill="#cc7b00" d="M105 1228L295 1113 1415 1165 1445 1180 1210 1286z"/>
          <path fill="url(#baseF)" d="M38 1335C38 1270 65 1225 105 1228L1210 1286 1245 1380 1230 1482 1185 1483 80 1425 50 1420Q38 1415 40 1395z"/>
          <path fill="url(#baseR)" d="M1210 1286L1415 1166C1460 1170 1492 1220 1492 1290L1490 1345 1280 1468Q1250 1487 1185 1483L1183 1370Q1185 1300 1210 1286z"/>
          <ellipse cx="1212" cy="1340" rx="32" ry="36" fill="url(#shine)" stroke="none"/>
          <path fill="none" d="M38 1335L1183 1398Q1245 1403 1278 1385L1484 1268M80 1423V1340Q82 1255 105 1228M1280 1468L1278 1385C1275 1330 1245 1290 1210 1286"/>
          <path fill="#b97100" d="M318 840L297 1148 532 1162 500 950z"/>
          <path fill="#a16100" d="M500 950L545 965 568 1144 532 1162z"/>
          <path fill="#c07500" d="M297 1148L532 1162 568 1144 580 1150 535 1176 283 1160z"/>
          <path fill="#a86700" d="M400 645C450 625 490 660 500 715L440 720z"/>
          <path fill="#b97100" d="M298 765C300 700 340 650 375 645 395 642 415 645 430 655L555 745 440 800 410 902C340 890 298 840 298 765z"/>
          <path fill="#9b5e00" d="M415 662L430 655 555 745 515 755z"/>
          <path fill="none" d="M355 655C375 645 395 660 413 663L515 752"/>
          <ellipse cx="380" cy="775" rx="49" ry="72" fill="#a56500"/><ellipse cx="377" cy="780" rx="45" ry="66" fill="#c67e14"/><ellipse cx="370" cy="784" rx="37" ry="50" fill="#ba7200"/>
          <path fill="#ad6900" d="M1060 76C1080 60 1100 55 1117 55 1190 60 1240 130 1243 235L1275 1187 1238 1210 1200 700z"/>
          <path fill="#b97100" d="M970 235C975 140 1020 78 1090 76 1150 85 1205 160 1208 250L1238 1200 1000 1186z"/>
          <path fill="none" d="M1208 250L1243 234"/>
          <path fill="#c07500" d="M1001 1186L1238 1198 1275 1180 1287 1186 1241 1212 990 1198z"/>
          <path fill="#006bb5" d="M1060 132C1090 125 1125 140 1140 172L1440 608C1468 645 1468 720 1440 760L1300 620z"/>
          <path fill="#0075c5" fill-rule="evenodd" d="M986 248C988 180 1020 140 1060 137 1095 132 1120 155 1132 178L1405 590 1420 720 1300 700 1235 608 1030 360C1000 325 986 290 986 248zM1128 370Q1125 340 1150 337 1160 337 1165 345L1300 525Q1310 570 1290 583 1280 585 1265 565L1140 395Q1130 385 1128 370z"/>
          <path fill="#b06b00" d="M1152 338L1165 345 1300 525Q1306 555 1292 573L1150 383Q1143 360 1152 338z"/>
          <path fill="#d8d8d8" stroke="none" d="M1252 466L1298 527Q1305 553 1291 572L1252 518z"/>
          <path fill="#0067ae" d="M1128 370Q1125 340 1150 337 1142 360 1150 383L1292 573 1290 583Q1278 582 1265 565L1140 395Q1130 385 1128 370zM1140 393L1152 383M1270 573L1282 560"/>
          <path fill="none" d="M1210 405L1214 460"/>
          <ellipse cx="1068" cy="258" rx="49" ry="70" fill="#0061a6"/><ellipse cx="1067" cy="260" rx="46" ry="64" fill="#c67e18"/><ellipse cx="1060" cy="264" rx="38" ry="50" fill="#b97100"/>
          <path fill="#00a500" d="M465 773L490 763 1355 592C1405 572 1450 610 1452 690 1452 740 1420 795 1375 801L1340 700z"/>
          <path fill="#00bb00" d="M403 870C405 820 430 785 465 778L1350 600C1400 590 1425 640 1425 700 1425 750 1405 790 1370 802L480 982C440 980 403 940 403 870z"/>
          <ellipse cx="511" cy="871" rx="50" ry="71" fill="#1fca2c"/><ellipse cx="517" cy="870" rx="42" ry="61" fill="#cc8722"/><ellipse cx="513" cy="871" rx="34" ry="50" fill="#b97100"/>
          <ellipse cx="1354" cy="699" rx="48" ry="72" fill="#12c220"/><ellipse cx="1359" cy="698" rx="41" ry="61" fill="#1b86ce"/><ellipse cx="1355" cy="700" rx="34" ry="49" fill="#0075c5"/>
        </g>
        <g fill="none" stroke-width="1">
          <path d="M1365 745v26M1365 745l69 3" stroke="#49dc55"/><path d="M1402 837v-74l32-14" stroke="#e04a40"/><path d="M1434 748l3 74" stroke="#3d9a54"/>
          <path d="M1436 816l-5-142" stroke="#2020d0" stroke-width="2"/><path d="M1431 675l5 15h-9zM1433 708l5 18h-10z" fill="#1c1cd0"/>
          <path d="M1335 822h95" stroke="#c33c00" stroke-opacity=".4"/><path d="M1437 823l-72 38v-8" stroke="#2bc940"/><path d="M1340 817l11 4-11 4z" fill="#d63c12" fill-opacity=".5"/>
        </g>
        <circle cx="1437" cy="824" r="6" fill="#0d0d80"/><circle cx="1395" cy="843" r="4" fill="#058f14"/><circle cx="1379" cy="849" r="4" fill="#058f14"/>
        <text x="1410" y="842" font-size="15" fill="#222">CSYS</text>
        <text x="1424" y="664" font-size="18" fill="#2222dd">Z</text>
        <clipPath id="upper"><path d="M800 800h80v56h-80z"/></clipPath>
        <circle cx="838" cy="844" r="29" fill="#bdb845"/><circle cx="838" cy="844" r="29" fill="#b878ed" clip-path="url(#upper)"/><path d="M809 829l58 3" stroke="#33233b"/>
        <path d="M838 831l10 22q-10 5-20 0z" fill="url(#tc)"/><path d="M825 839q0-9 11-4M841 835q11-5 11 4" fill="none" stroke="#277eae" stroke-width="2"/><path d="M838 828v28" stroke="#176479"/>
        <path d="M543 935l-3-60" stroke="#2222d8" stroke-width="2"/><path d="M540 864l4 16h-8z" fill="#1b1bcf"/><path d="M543 936l-56-2" stroke="#d8222d" stroke-width="2"/><path d="M477 933l15-5v9z" fill="#c31f26"/><path d="M543 936l-24 11" stroke="#3dc93a" stroke-width="2"/><circle cx="517" cy="947" r="5" fill="#147f18"/>
        <text x="534" y="861" font-size="18" fill="#2222dd">Z</text><text x="463" y="939" font-size="18" fill="#dc2530">X</text><text x="503" y="956" font-size="15" fill="#35c232">Y</text>
        <text x="453" y="1040" font-size="20" fill="#151515">198.587mm</text>
      </svg>
      <div class="viewbar">
        <button aria-label="Exit"><svg class="ic"><use href="#v-exit"/></svg></button>
        <button aria-label="Display"><svg class="ic"><use href="#v-hand"/></svg></button><i class="caret"></i>
        <button aria-label="Edit"><svg class="ic"><use href="#v-pen"/></svg></button>
        <button aria-label="Align plane"><svg class="ic"><use href="#v-box"/></svg></button>
        <button aria-label="Shaded"><svg class="ic"><use href="#v-cube"/></svg></button><i class="caret"></i>
        <button aria-label="Wireframe"><svg class="ic"><use href="#v-wire"/></svg></button><i class="caret"></i>
        <button aria-label="Facets"><svg class="ic"><use href="#v-geo"/></svg></button><i class="caret"></i>
        <button aria-label="Look"><svg class="ic"><use href="#v-look"/></svg></button><i class="caret"></i>
        <button aria-label="Center view"><svg class="ic"><use href="#v-target"/></svg></button><i class="caret"></i>
        <button aria-label="Background"><svg class="ic"><use href="#v-doc"/></svg></button>
        <button aria-label="Dimension"><svg class="ic"><use href="#v-dim"/></svg></button><i class="caret"></i>
        <button aria-label="Screen"><svg class="ic"><use href="#v-mon"/></svg></button><i class="caret"></i>
        <button aria-label="Edge color"><svg class="ic"><path d="M0 4h20v12H0z"/></svg></button>
        <button aria-label="Face color"><svg class="ic"><path d="M1 1h18v18H1z" fill="#bfe5f0" stroke="#222" stroke-width="1.500"/></svg></button>
        <button aria-label="Layers"><svg class="ic"><use href="#v-layer"/></svg></button><i class="caret"></i>
        <div class="layer"><svg width="36" height="20"><path d="M4 8q0-6 4-6t4 6l-2 5H6z" fill="#ffef9c" stroke="#a08d2b"/><path d="M6 16h4" stroke="#777" stroke-width="2"/><circle cx="25" cy="10" r="6.500" fill="#e8e02a" stroke="#55825b"/></svg><span class="combo"><select aria-label="Layer"><option>Layer0000</option></select></span></div>
      </div>
      <section class="output">
        <header><h2>Output</h2><button aria-label="Pin output"><svg width="8" height="8"><path d="M0 0h8v8H0z"/></svg></button><button aria-label="Close output"><svg width="16" height="16"><use href="#x"/></svg></button></header>
        <div class="log">
          <div class="lines"><p class="warn">Operations are not supported.</p><p>[_asm1.Z3ASM] opened in 0.2060 seconds.</p><p>Activate an object for editing</p><p>Done.</p><p>Assembly [_asm1] activated.</p></div>
          <div class="scroll"><svg width="10" height="6"><path d="M5 0l5 6H0z" fill="#444"/></svg><span class="thumb"></span><svg width="10" height="6"><path d="M0 0h10L5 6z" fill="#444"/></svg></div>
        </div>
      </section>
    </div>
  </section>
</main>

<footer class="status">
  <span class="hint">Select command or entity.</span>
  <button class="lit" aria-label="Toggle manager"><svg class="ic"><path d="M1 2h18v16H1z" fill="#eef2f8" stroke="#4a5d8d"/><path d="M1 2h18v4H1z" fill="#6f8cc0"/><path d="M4 8v9" stroke="#4a5d8d" stroke-width="2" stroke-dasharray="2 1"/><path d="M9 9h8M13 9v8" stroke="#a4362c" stroke-width="2"/></svg></button>
  <button aria-label="Display"><svg class="ic"><path d="M0 2h20v13H0z" fill="#2aaabd"/><path d="M0 2h20v6H0z" fill="#58c6d2"/><path d="M5 18h10v-3H5z" fill="#444"/></svg></button>
  <button class="lit" aria-label="Toggle output"><svg class="ic"><path d="M1 2h18v16H1z" fill="#eef2f8" stroke="#4a5d8d"/><path d="M1 2h18v4H1z" fill="#6f8cc0"/><path d="M4 10h12M4 14h12" stroke="#4a5d8d" stroke-width="1.500"/></svg></button>
  <input type="text" aria-label="Command line">
</footer>
</body>
</html>
```
FILE: styles.css
```css
* { box-sizing: border-box; }
body { margin: 0; height: 100vh; display: flex; flex-direction: column; overflow: hidden; background: #e2e6e8; color: #3d4043; font: 14px/20px "Open Sans", "Noto Sans", sans-serif; }
h1, h2, p { margin: 0; font-size: 14px; font-weight: 400; }
a { color: inherit; text-decoration: none; }
button, input, select { font: inherit; color: inherit; margin: 0; padding: 0; border: 0; background: none; border-radius: 0; outline: none; }
button { display: flex; align-items: center; justify-content: center; flex: none; }
svg { display: block; flex: none; }
.defs { position: absolute; width: 0; height: 0; }
.ic { width: 20px; height: 20px; }
.caret { display: inline-block; flex: none; width: 0; height: 0; border: 4px solid transparent; border-top: 5px solid #8b8d8f; border-bottom: 0; }
.lit { background: #fbe27a; border: 1px solid #d8a63b; border-radius: 2px; }

.titlebar { display: flex; align-items: center; height: 35px; padding-left: 2px; background: linear-gradient(#e6e8e9, #e1e4e5); flex: none; }
.logo-rule { width: 1px; height: 14px; margin: 0 15px 0 3px; background: #889; }
.quick { display: flex; }
.quick button { width: 28px; }
.more { margin-left: 3px; width: 12px; }
.back { margin-left: 8px; width: 8px; }
.menu { display: flex; gap: 18px; margin-left: 15px; white-space: nowrap; }
.apptitle { margin-left: 50px; white-space: nowrap; }
.winbtns { display: flex; gap: 14px; margin: 0 8px 6px auto; }

.tabbar { display: flex; align-items: stretch; height: 27px; flex: none; border-bottom: 1px solid #8d97a3; white-space: nowrap; }
.filetab { width: 66px; margin-right: 5px; background: linear-gradient(#2f6cc5, #2257b4 60%, #3b80d8); color: #fff; border-radius: 3px 3px 0 0; }
.tabs { display: grid; grid-template-columns: 38px 57px 69px 67px 54px 75px 69px 70px 97px 24px 20px 28px 54px 43px 55px 30px 37px 40px 55px 69px 20px 49px 69px 99px 98px 97px; }
.tabs a { padding: 5px 0 0 2px; }
.tabs .on { background: #fff; margin-right: 5px; margin-bottom: -1px; border: 1px solid #c5cacf; border-bottom: 0; padding: 4px 0 0 1px; border-radius: 2px 2px 0 0; }
.collapse { width: 18px; padding-bottom: 4px; }
.find { display: flex; align-items: center; flex: 1; max-width: 182px; margin: 1px 0 3px 12px; padding: 0 8px 0 3px; background: #fff; border: 1px solid #d5d8db; }
.find input { flex: 1; min-width: 0; }
::placeholder { color: #95989b; opacity: 1; }
.utils { display: flex; align-items: center; gap: 9px; margin: 0 3px 2px auto; }
.help { width: 20px; height: 20px; margin: 0 0 0 5px; border-radius: 50%; background: #2957ad; color: #fff; font-weight: 700; border: 1px solid #8ba3cc; }
.utils .caret { margin-right: 4px; }
.doc { width: 12px; }

.ribbon { display: flex; flex: none; background: linear-gradient(#fff 0, #fdfdfe 50%, #eceff0); border-bottom: 2px solid #8f98a3; }
.group { position: relative; padding-top: 6px; border-right: 1px solid #cbd0d4; padding-bottom: 2px; }
.tools { display: grid; height: 86px; justify-content: center; align-items: start; }
.tools button, .tall { display: block; text-align: center; white-space: nowrap; padding: 0; }
.tools svg, .tall svg { width: 40px; height: 38px; margin: 0 auto 3px; }
.tools .caret, .tall .caret { vertical-align: 3px; }
.group h2 { text-align: center; line-height: 20px; margin-bottom: 1px; }
.group .t-basic { padding-left: 8px; }
.group .t-edit { padding-right: 14px; }
.g-basic { grid-template-columns: 57px 54px 64px 70px 58px 44px; padding: 0 3px 0 8px; }
.g-eng { grid-template-columns: 46px 74px 48px 50px 40px 44px 64px 41px 56px; padding: 0 2px 0 5px; }
.g-edit { grid-template-columns: 62px 56px 58px 52px 49px 80px 58px 72px 34px; padding: 0 12px 0 5px; }
.g-morph { grid-template-columns: 76px 86px 60px 96px; padding: 0 3px; }
.tools button { justify-self: center; }
.launch { position: absolute; right: 4px; bottom: 6px; }
.g-more { width: 61px; }
.tall { width: 60px; padding-top: 2px; }
.tall svg { margin-bottom: 13px; }
.tall .caret { border-top-color: #333; }
.g-datum { width: 81px; }

.pickbar { display: flex; align-items: center; height: 30px; margin-top: 3px; flex: none; background: #e1e6eb; border-top: 1px solid #8f98a3; border-bottom: 1px solid #8f98a3; }
.pickbar button { width: 28px; height: 25px; }
.pickbar .lit { width: 26px; }
.grip { width: 3px; height: 20px; margin: 0 4px; border-left: 2px dotted #888; }
.pickbar .caret { margin: 0 3px 0 4px; }
.lasso { margin-left: 3px; }
.rule { width: 1px; height: 22px; margin: 0 3px 0 4px; background: #aab0b6; }
.combo { position: relative; display: flex; height: 24px; background: #fff; }
.combo::after { content: ""; position: absolute; right: 6px; top: 9px; border: 4px solid transparent; border-top: 5px solid #333; border-bottom: 0; pointer-events: none; }
.combo select { appearance: none; width: 100%; padding: 0 18px 0 3px; }
.w-pick { width: 166px; margin: 0 1px 0 3px; }
.w-pick select { padding-left: 4px; }

.work { display: flex; flex: 1; min-height: 0; }
.manager { width: 446px; flex: none; display: flex; flex-direction: column; }
.mhead { display: flex; align-items: center; gap: 9px; height: 28px; padding: 0 7px 0 5px; flex: none; }
.mhead h1 { flex: 1; line-height: 20px; }
.mbody { display: flex; flex: 1; min-height: 0; border-top: 1px solid #a7bccb; }
.side { width: 41px; flex: none; }
.side button { width: 40px; height: 60px; }
.side .on { height: 58px; background: #f1f6fb; border: 1px solid #9dbbd8; border-right: 0; }
.side svg { width: 30px; height: 30px; }
.panel { flex: 1; display: flex; flex-direction: column; border: 1px solid #9db0c4; background: #fff; margin-right: 1px; min-width: 0; }
.search { display: grid; grid-template-columns: 186px 1fr 30px; height: 30px; flex: none; }
.search .combo { height: 30px; border-right: 1px solid #bcc6cd; }
.search .combo::after { top: 12px; }
.search input { padding-left: 3px; min-width: 0; }
.search button { border: 1px solid #aab4d8; border-radius: 2px; }
.tree { border-collapse: collapse; width: 100%; table-layout: fixed; }
.tree th { height: 30px; padding: 0 0 0 5px; font-weight: 400; text-align: left; background: #dbe2e6; border-top: 1px solid #bac4ca; border-bottom: 1px solid #bac4ca; }
.tree th:first-child { width: 287px; }
.tree td { height: 23px; padding: 0; white-space: nowrap; }
.tree th:first-child, .tree td:first-child { border-right: 1px solid #c3c9cd; }
.tree tbody tr:nth-child(even) { background: #f3f3f4; }
.tree td svg { display: inline-block; vertical-align: middle; }
.chev { width: 12px; height: 12px; fill: none; stroke: #888b8d; stroke-width: 3; margin-right: 9px; }
.node { width: 18px; height: 18px; margin-right: 4px; }
.tree .l0 { padding-left: 3px; }
.tree .l1 { padding-left: 21px; }
.tree .l2 { padding-left: 58px; }
.strong { color: #111; }
.tree input { appearance: none; width: 16px; height: 16px; border: 1px solid #444; vertical-align: middle; margin-right: 9px; background: #fff; position: relative; }
.tree input:checked::after { content: ""; position: absolute; left: 4px; top: 0; width: 6px; height: 11px; border: solid #2aa12c; border-width: 0 3px 3px 0; transform: rotate(40deg); }
.arrow { width: 20px; height: 18px; margin-right: 4px; }
.tree .stop { color: #d8283a; font-size: 15px; }
.blank { flex: 1; background: repeating-linear-gradient(#fff 0 23px, #f3f3f4 23px 46px); }
.replay { justify-content: flex-start; gap: 6px; height: 30px; padding-left: 5px; background: #fff; border-top: 1px solid #777d84; font-weight: 700; }

.docarea { flex: 1; min-width: 0; display: flex; flex-direction: column; margin-left: 3px; margin-right: 3px; }
.doctabs { display: flex; height: 28px; flex: none; border-bottom: 1px solid #a7bccb; }
.doctab { display: flex; align-items: center; gap: 8px; width: 170px; padding-left: 39px; background: #f5faff; border: 1px solid #a3bfdd; border-bottom: 0; }
.plus { width: 30px; }
.tablist { margin-left: auto; width: 22px; }
.canvas { position: relative; flex: 1; min-height: 0; background: linear-gradient(#fefefe 0, #f7f7f7 8%, #efefef 17%, #dedede 34%, #b0b0b0 82%, #9d9d9d); border-left: 1px solid #8fa2d0; border-bottom: 1px solid #8fa2d0; }
.scene { position: absolute; inset: 0; width: 100%; height: 100%; font-family: "Open Sans", sans-serif; }
.model { stroke: #1c1408; stroke-width: 2; stroke-linejoin: round; }
.viewbar { position: relative; display: flex; align-items: center; width: max-content; margin: 0 auto; padding-top: 1px; height: 30px; }
.viewbar button { width: 29px; }
.viewbar .caret { width: 10px; margin: 0 6px 0 2px; border-width: 5px 5px 0; }
.layer { display: flex; align-items: center; height: 26px; width: 142px; margin-left: 1px; padding-left: 8px; background: #fff; border: 1px solid #d5d8da; }
.layer .combo { flex: 1; }
.output { position: absolute; right: 34px; bottom: -12px; width: 342px; height: 121px; display: flex; flex-direction: column; background: #dbe1e5; border: 1px solid #596066; padding: 0 2px 2px; z-index: 2; }
.output header { display: flex; align-items: center; gap: 12px; height: 28px; padding: 2px 6px 0 3px; flex: none; }
.output h2 { flex: 1; font-weight: 700; }
.log { flex: 1; display: flex; min-height: 0; background: #fff; border-top: 1px solid #c0c5c9; }
.lines { flex: 1; padding-left: 5px; overflow: hidden; color: #151515; white-space: nowrap; display: flex; flex-direction: column; justify-content: flex-end; padding-bottom: 2px; }
.warn { color: #c2824a; }
.scroll { width: 16px; background: #e3e6e9; display: flex; flex-direction: column; align-items: center; padding: 6px 0; }
.thumb { width: 14px; height: 34px; margin: auto 0 6px; border: 1px solid #848a92; background: repeating-linear-gradient(#888 0 1px, transparent 1px 4px) center / 8px 9px no-repeat #f3f5f8; }

.status { display: flex; align-items: center; height: 34px; flex: none; background: #e2e5e6; }
.hint { flex: 1; padding-left: 6px; }
.status button { width: 27px; height: 27px; margin-right: 7px; }
.status .lit { border: 2px solid #dfb545; }
.status input { width: 439px; height: 28px; background: #fff; border: 1px solid #d3d8e4; }
```
